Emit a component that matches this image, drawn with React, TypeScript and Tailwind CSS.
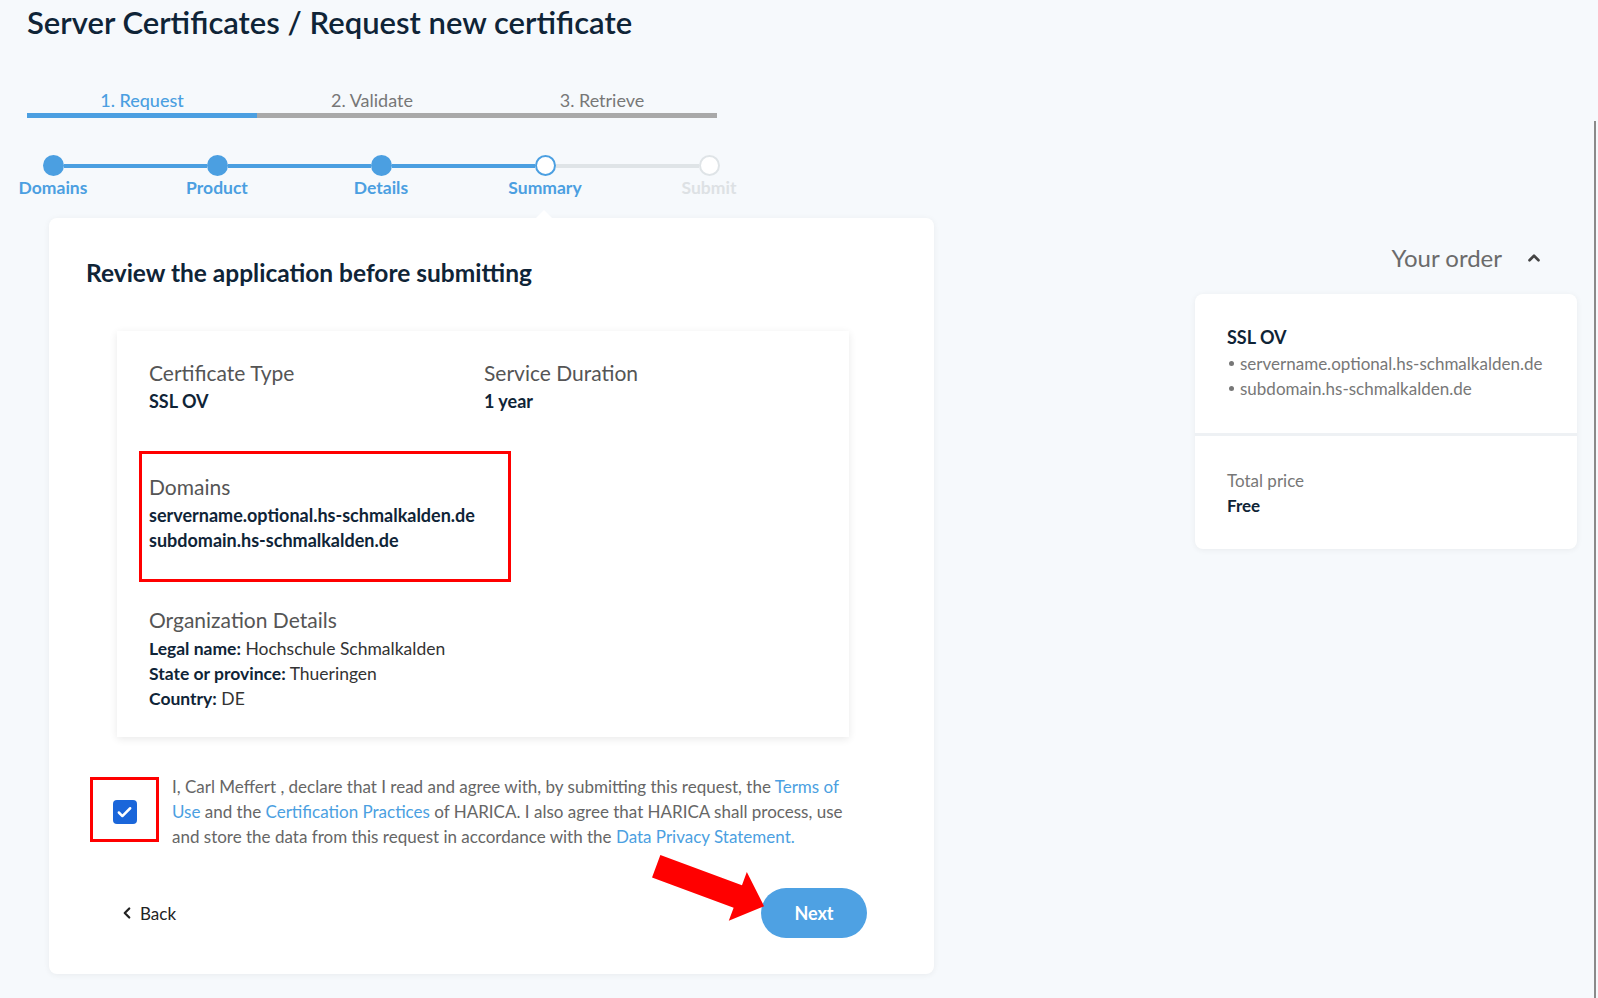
import { Check, ChevronLeft, ChevronUp } from "lucide-react";

const steps = [
  { label: "Domains", state: "done" },
  { label: "Product", state: "done" },
  { label: "Details", state: "done" },
  { label: "Summary", state: "current" },
  { label: "Submit", state: "todo" },
];

const tabs = [
  { label: "1. Request", active: true },
  { label: "2. Validate", active: false },
  { label: "3. Retrieve", active: false },
];

const domains = ["servername.optional.hs-schmalkalden.de", "subdomain.hs-schmalkalden.de"];

const Stepper = () => (
  <div className="mt-[37px] ml-[-29px] flex">
    {steps.map((step, i) => {
      const leftBlue = i > 0 && i <= 3;
      const rightBlue = i < 3;
      return (
        <div key={step.label} className="flex w-[164px] flex-col items-center">
          <div className="flex w-full items-center">
            <div
              className={`h-[4px] flex-1 ${i === 0 ? "bg-transparent" : leftBlue ? "bg-[#4b9fe1]" : "bg-[#dfe4e7]"}`}
            />
            {step.state === "done" && <div className="h-[21px] w-[21px] rounded-full bg-[#4b9fe1]" />}
            {step.state === "current" && (
              <div className="h-[21px] w-[21px] rounded-full border-[2.5px] border-[#4b9fe1] bg-white" />
            )}
            {step.state === "todo" && (
              <div className="h-[21px] w-[21px] rounded-full border-2 border-[#dfe4e7] bg-white" />
            )}
            <div
              className={`h-[4px] flex-1 ${i === steps.length - 1 ? "bg-transparent" : rightBlue ? "bg-[#4b9fe1]" : "bg-[#dfe4e7]"}`}
            />
          </div>
          <span
            className={`mt-[2px] text-[17.5px] leading-[20px] font-bold ${step.state === "todo" ? "text-[#dde1e4]" : "text-[#4b9fe1]"}`}
          >
            {step.label}
          </span>
        </div>
      );
    })}
  </div>
);

const Field = ({ label, value }: { label: string; value: string }) => (
  <div>
    <div className="text-[21px] leading-[24px] text-[#555]">{label}</div>
    <div className="mt-[4px] text-[18px] leading-[25px] font-bold text-[#0f2437]">{value}</div>
  </div>
);

export default function App() {
  return (
    <div className="flex min-h-screen w-full bg-[#f6f9fc] font-[Lato,sans-serif]">
      <div className="min-w-0 flex-1">
        <h1 className="pt-[4px] pl-[27px] text-[31px] leading-[37px] font-semibold text-[#0f2437]">
          Server Certificates / Request new certificate
        </h1>

        <div className="mt-[48px] ml-[27px] grid w-[690px] grid-cols-3">
          {tabs.map((t) => (
            <div key={t.label} className="flex flex-col items-center">
              <span className={`text-[18px] leading-[22px] ${t.active ? "font-medium text-[#4b9fe1]" : "text-[#777]"}`}>
                {t.label}
              </span>
              <div className={`mt-[2px] h-[5px] w-full ${t.active ? "bg-[#4b9fe1]" : "bg-[#a9a9a9]"}`} />
            </div>
          ))}
        </div>

        <Stepper />

        <div className="relative mt-[20px] ml-[49px] w-[885px] rounded-[8px] bg-white pt-[40px] pb-[36px] shadow-[0_1px_6px_rgba(0,0,0,0.06)]">
          <svg className="absolute top-[-8px] left-[486px]" width="18" height="9" viewBox="0 0 18 9">
            <polygon points="0,9 9,0 18,9" fill="#ffffff" />
          </svg>

          <h2 className="ml-[37px] text-[24.5px] leading-[29px] font-bold text-[#0f2437]">
            Review the application before submitting
          </h2>

          <div className="mt-[44px] ml-[68px] w-[732px] bg-white pt-[30px] pb-[26px] pl-[32px] shadow-[0_2px_8px_rgba(0,0,0,0.09)]">
            <div className="grid grid-cols-[335px_1fr]">
              <Field label="Certificate Type" value="SSL OV" />
              <Field label="Service Duration" value="1 year" />
            </div>

            <div className="mt-[37px] ml-[-10px] w-[372px] border-[3px] border-[#ff0000] pt-[21px] pb-[26px] pl-[7px]">
              <div className="text-[21px] leading-[24px] text-[#555]">Domains</div>
              <div className="mt-[4px]">
                {domains.map((d) => (
                  <div key={d} className="text-[18px] leading-[25px] font-bold text-[#0f2437]">
                    {d}
                  </div>
                ))}
              </div>
            </div>

            <div className="mt-[26px] text-[21px] leading-[24px] text-[#555]">Organization Details</div>
            <div className="mt-[4px] text-[17.5px] leading-[25px] text-[#333]">
              <div>
                <span className="font-bold text-[#0f2437]">Legal name:</span> Hochschule Schmalkalden
              </div>
              <div>
                <span className="font-bold text-[#0f2437]">State or province:</span> Thueringen
              </div>
              <div>
                <span className="font-bold text-[#0f2437]">Country:</span> DE
              </div>
            </div>
          </div>

          <div className="mt-[37px] flex items-start">
            <div className="mt-[3px] ml-[41px] flex h-[65px] w-[69px] shrink-0 items-start justify-center border-[3px] border-[#ff0000] pt-[20px]">
              <div className="flex h-[24px] w-[24px] items-center justify-center rounded-[4px] bg-[#1a66da]">
                <Check className="h-[17px] w-[17px] text-white" strokeWidth={3.5} />
              </div>
            </div>
            <p className="ml-[13px] w-[680px] text-[17px] leading-[25px] text-[#666]">
              I, Carl Meffert , declare that I read and agree with, by submitting this request, the{" "}
              <span className="text-[#4b9fe1]">Terms of Use</span> and the{" "}
              <span className="text-[#4b9fe1]">Certification Practices</span> of HARICA. I also agree that HARICA
              shall process, use and store the data from this request in accordance with the{" "}
              <span className="text-[#4b9fe1]">Data Privacy Statement.</span>
            </p>
          </div>

          <div className="mt-[39px] mr-[67px] ml-[69px] flex items-center justify-between">
            <button className="flex items-center gap-[4px] text-[17px] leading-[25px] text-[#222]">
              <ChevronLeft className="h-[18px] w-[18px]" strokeWidth={3} />
              Back
            </button>
            <button className="h-[50px] w-[106px] rounded-full bg-[#4ea1e3] text-[18px] font-bold text-white">
              Next
            </button>
          </div>

          <svg className="absolute top-[623px] left-[591px]" width="140" height="90" viewBox="0 0 140 90">
            <g transform="translate(16.2 25.3) rotate(20.3)">
              <polygon points="0,-12 87,-12 87,-26 115,0 87,26 87,12 0,12" fill="#ff0000" />
            </g>
          </svg>
        </div>
      </div>

      <div className="mr-[17px] w-[382px] shrink-0 pt-[243px]">
        <div className="flex items-center justify-end gap-[23px] pr-[34px]">
          <span className="text-[24px] leading-[29px] text-[#6b6b6b]">Your order</span>
          <ChevronUp className="h-[18px] w-[18px] text-[#444]" strokeWidth={3.5} />
        </div>

        <div className="mt-[22px] rounded-[8px] bg-white shadow-[0_1px_6px_rgba(0,0,0,0.06)]">
          <div className="pt-[32px] pb-[32px] pl-[32px]">
            <div className="text-[18px] leading-[22px] font-bold text-[#0f2437]">SSL OV</div>
            <ul className="mt-[3px]">
              {domains.map((d) => (
                <li key={d} className="flex items-center text-[17px] leading-[25px] text-[#777]">
                  <span className="mr-[6px] ml-[2px] h-[5px] w-[5px] rounded-full bg-[#777]" />
                  {d}
                </li>
              ))}
            </ul>
          </div>
          <div className="h-[3px] bg-[#eef1f4]" />
          <div className="pt-[32px] pb-[31px] pl-[32px] text-[17px] leading-[25px]">
            <div className="text-[#777]">Total price</div>
            <div className="font-bold text-[#0f2437]">Free</div>
          </div>
        </div>
      </div>

      <div className="mt-[121px] mr-[2px] w-[2px] shrink-0 bg-[#8a8a8a]" />
    </div>
  );
}
